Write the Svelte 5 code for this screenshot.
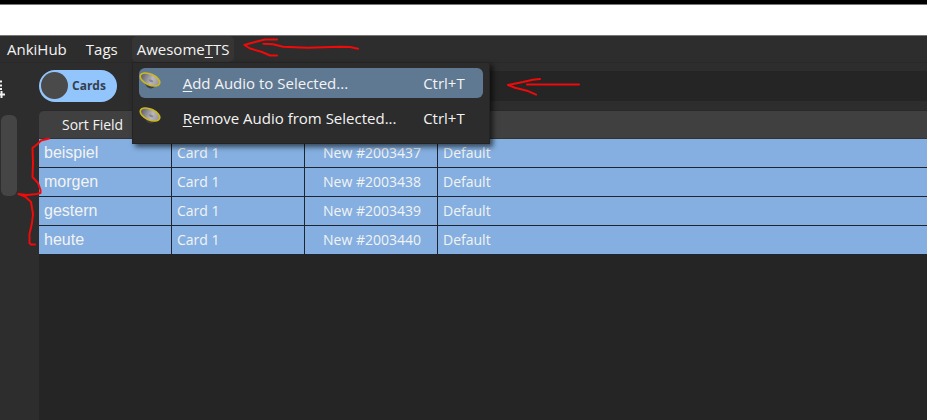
<script>
  const menus = ['AnkiHub', 'Tags'];
  const actions = [
    { key: 'A', rest: 'dd Audio to Selected...', active: true },
    { key: 'R', rest: 'emove Audio from Selected...', active: false }
  ];
  const cards = [
    { field: 'beispiel', due: 2003437 },
    { field: 'morgen', due: 2003438 },
    { field: 'gestern', due: 2003439 },
    { field: 'heute', due: 2003440 }
  ];
</script>

<div class="window">
  <div class="top-edge"></div>
  <nav class="menubar">
    {#each menus as name}
      <button class="menu-title">{name}</button>
    {/each}
    <div class="menu-holder">
      <button class="menu-title open" aria-haspopup="menu" aria-expanded="true">Awesome<u>T</u>TS</button>
      <div class="menu" role="menu">
        {#each actions as action}
          <button class="action" class:active={action.active} role="menuitem">
            <svg class="speaker" viewBox="0 0 22 18" aria-hidden="true">
              <defs>
                <linearGradient id="cone" x1="0" y1="0" x2="1" y2="0">
                  <stop offset="0" stop-color="#5c5a60" />
                  <stop offset="0.6" stop-color="#b9b6be" />
                  <stop offset="1" stop-color="#96929a" />
                </linearGradient>
              </defs>
              <path d="M5 10 L8 15 Q12 18 16 14.500 L17 12Z" fill="#3c4044" />
              <ellipse cx="11" cy="7.500" rx="10.400" ry="5.400" transform="rotate(24 11 7.500)" fill="url(#cone)" stroke="#cdb91e" stroke-width="1.600" />
              <ellipse cx="12" cy="8.800" rx="2.400" ry="1.200" transform="rotate(24 12 8.800)" fill="#88858d" />
            </svg>
            <span class="label"><u>{action.key}</u>{action.rest}</span>
            <span class="shortcut">Ctrl+T</span>
          </button>
        {/each}
      </div>
    </div>
  </nav>

  <div class="body">
    <aside>
      <svg class="tool" viewBox="0 0 5 20" aria-hidden="true">
        <path d="M0 1.500H2M0 5.500H2M0 9H2M0 14.500H5M1.500 11V18" stroke="#f2f2f2" stroke-width="2" fill="none" />
      </svg>
      <div class="thumb"></div>
    </aside>
    <main>
      <div class="toolbar">
        <button class="toggle" role="switch" aria-checked="false"><span class="knob"></span>Cards</button>
        <input class="search" type="text" aria-label="Search cards" />
      </div>
      <table>
        <colgroup><col class="c1" /><col class="c2" /><col class="c2" /><col /></colgroup>
        <thead>
          <tr><th>Sort Field</th><th></th><th></th><th></th></tr>
        </thead>
        <tbody>
          {#each cards as card}
            <tr>
              <td class="field">{card.field}</td>
              <td>Card 1</td>
              <td class="due">New #{card.due}</td>
              <td>Default</td>
            </tr>
          {/each}
        </tbody>
      </table>
    </main>
  </div>

  <svg class="marks" width="600" height="260" viewBox="0 0 600 260" aria-hidden="true">
    <path d="M277 39.500L265 39.500L255 42L244.500 45L250 48.500L262 52L270 55.500H277M263.500 43.700L273 44.300L283 46.700L307 47.700L340 46.700L350 47L358 48.700" />
    <path d="M540 79L533 79.700L523 82L508 85L515 87.700L527 90.700L536 94.700M527 84.500H579" />
    <path d="M49 138.500L41 140.500L37 144.500L32.500 148L33 163L32.500 177L38 183L40.500 190V193L37 194L27 195L18.500 194L25 196.500L31 202L33 214L32 223L29.500 234V243L31 244.500H35" />
  </svg>
</div>

<style>
  :global(body) {
    margin: 0;
    background: #2d2d2d;
  }
  .window {
    position: relative;
    min-height: 100vh;
    display: flex;
    flex-direction: column;
    overflow: hidden;
    background: #2d2d2d;
    color: #f3f3f3;
    font: 14px/20px "Open Sans", "Noto Sans", sans-serif;
  }
  button {
    font: inherit;
    color: inherit;
    border: 0;
    background: none;
    padding: 0;
  }
  .top-edge {
    height: 31px;
    background: #fff;
    border-top: 4px solid #000;
    border-bottom: 1px solid #777;
    box-shadow: inset 0 1px #777;
  }
  .menubar {
    display: flex;
    gap: 9px;
    height: 26px;
    padding-left: 2px;
    border-bottom: 1px solid #292929;
    font-size: 15px;
  }
  .menu-title {
    height: 26px;
    padding: 0 5px;
    border-radius: 5px;
    white-space: nowrap;
  }
  .menu-title.open {
    background: #353535;
  }
  .menu-holder {
    position: relative;
  }
  u {
    text-underline-offset: 2px;
  }
  .menu {
    position: absolute;
    z-index: 2;
    top: 26px;
    left: 0;
    width: 344px;
    padding: 5px 6px 10px;
    display: flex;
    flex-direction: column;
    gap: 5px;
    background: #2c2c2c;
    border: 1px solid #242424;
    box-shadow: 3px 3px 5px #0009;
  }
  .action {
    display: flex;
    align-items: center;
    height: 30px;
    border-radius: 6px;
    padding-right: 18px;
    text-align: left;
    white-space: nowrap;
  }
  .action.active {
    background: #607993;
  }
  .speaker {
    flex: none;
    width: 22px;
    height: 18px;
    margin-bottom: 4px;
  }
  .label {
    flex: 1;
    padding-left: 22px;
  }
  .body {
    flex: 1;
    display: flex;
  }
  aside {
    width: 39px;
    flex: none;
    padding-top: 17px;
  }
  .tool {
    display: block;
    width: 5px;
    height: 20px;
  }
  .thumb {
    width: 16px;
    height: 81px;
    margin: 15px 0 0 1px;
    border-radius: 6px;
    background: #454545;
  }
  main {
    flex: 1;
    min-width: 0;
    display: flex;
    flex-direction: column;
    background: #252525;
  }
  .toolbar {
    display: flex;
    align-items: center;
    gap: 24px;
    height: 45px;
    padding-bottom: 2px;
    background: #2d2d2d;
    border-bottom: 1px solid #292929;
  }
  .toggle {
    display: flex;
    align-items: center;
    gap: 4px;
    width: 78px;
    height: 32px;
    padding-left: 2px;
    border-radius: 16px;
    background: #93c5fd;
    color: #34404d;
    font-weight: 700;
    font-size: 12px;
  }
  .knob {
    width: 27px;
    height: 27px;
    border-radius: 50%;
    background: #4a4a4a;
  }
  .search {
    flex: 1;
    min-width: 0;
    height: 30px;
    box-sizing: border-box;
    border: 0;
    background: #252525;
    color: inherit;
  }
  table {
    width: 100%;
    table-layout: fixed;
    border-collapse: separate;
    border-spacing: 0;
    background: #2d2d2d;
  }
  .c1,
  .c2 {
    width: 133px;
  }
  th,
  td {
    box-sizing: border-box;
    padding: 0 5px;
    white-space: nowrap;
    text-align: left;
  }
  th {
    height: 28px;
    font-weight: 400;
    background: #404040;
    border-bottom: 1px solid #333;
  }
  th:first-child {
    padding-left: 23px;
    border-top-left-radius: 5px;
  }
  td {
    height: 29px;
    background: #84afe0;
    border-right: 1px solid #1d2630;
    border-bottom: 1px solid #1d2630;
  }
  td:last-child {
    border-right: 0;
  }
  .field {
    font: 16px/20px "Liberation Sans", Arial, sans-serif;
    padding-bottom: 1px;
  }
  .due {
    text-align: right;
    padding-right: 16px;
  }
  .marks {
    position: absolute;
    z-index: 3;
    top: 0;
    left: 0;
    pointer-events: none;
    fill: none;
    stroke: #f00a0a;
    stroke-width: 2;
    stroke-linejoin: round;
    stroke-linecap: round;
  }
</style>
